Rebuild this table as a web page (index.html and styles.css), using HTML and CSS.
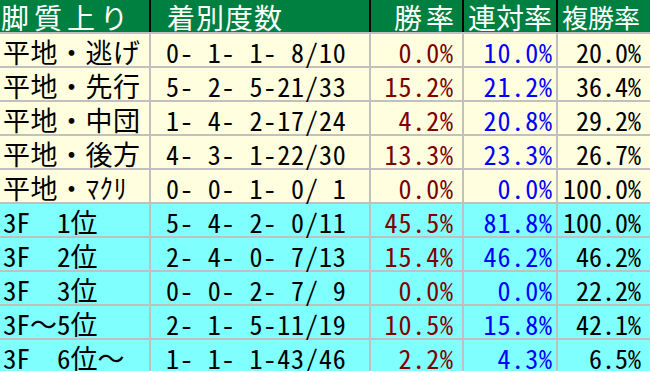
FILE: index.html
```
<!DOCTYPE html>
<html lang="ja">
<head>
<meta charset="utf-8">
<link rel="stylesheet" href="styles.css">
</head>
<body>
<div class="tbl">
  <div class="row head">
    <div class="c h1">脚質上り</div>
    <div class="c h2">着別度数</div>
    <div class="c h3">勝率</div>
    <div class="c h4">連対率</div>
    <div class="c h5">複勝率</div>
  </div>
  <div class="row cream">
    <div class="c lab">平地・逃げ</div>
    <div class="c num rec">0- 1- 1- 8/10</div>
    <div class="c num p3 red">0.0%</div>
    <div class="c num p4 blue">10.0%</div>
    <div class="c num p5">20.0%</div>
  </div>
  <div class="row cream">
    <div class="c lab">平地・先行</div>
    <div class="c num rec">5- 2- 5-21/33</div>
    <div class="c num p3 red">15.2%</div>
    <div class="c num p4 blue">21.2%</div>
    <div class="c num p5">36.4%</div>
  </div>
  <div class="row cream">
    <div class="c lab">平地・中団</div>
    <div class="c num rec">1- 4- 2-17/24</div>
    <div class="c num p3 red">4.2%</div>
    <div class="c num p4 blue">20.8%</div>
    <div class="c num p5">29.2%</div>
  </div>
  <div class="row cream">
    <div class="c lab">平地・後方</div>
    <div class="c num rec">4- 3- 1-22/30</div>
    <div class="c num p3 red">13.3%</div>
    <div class="c num p4 blue">23.3%</div>
    <div class="c num p5">26.7%</div>
  </div>
  <div class="row cream">
    <div class="c lab">平地・ﾏｸﾘ</div>
    <div class="c num rec">0- 0- 1- 0/ 1</div>
    <div class="c num p3 red">0.0%</div>
    <div class="c num p4 blue">0.0%</div>
    <div class="c num p5">100.0%</div>
  </div>
  <div class="row cyan">
    <div class="c lab3">3F  1位</div>
    <div class="c num rec">5- 4- 2- 0/11</div>
    <div class="c num p3 red">45.5%</div>
    <div class="c num p4 blue">81.8%</div>
    <div class="c num p5">100.0%</div>
  </div>
  <div class="row cyan">
    <div class="c lab3">3F  2位</div>
    <div class="c num rec">2- 4- 0- 7/13</div>
    <div class="c num p3 red">15.4%</div>
    <div class="c num p4 blue">46.2%</div>
    <div class="c num p5">46.2%</div>
  </div>
  <div class="row cyan">
    <div class="c lab3">3F  3位</div>
    <div class="c num rec">0- 0- 2- 7/ 9</div>
    <div class="c num p3 red">0.0%</div>
    <div class="c num p4 blue">0.0%</div>
    <div class="c num p5">22.2%</div>
  </div>
  <div class="row cyan">
    <div class="c lab3">3F～5位</div>
    <div class="c num rec">2- 1- 5-11/19</div>
    <div class="c num p3 red">10.5%</div>
    <div class="c num p4 blue">15.8%</div>
    <div class="c num p5">42.1%</div>
  </div>
  <div class="row cyan">
    <div class="c lab3">3F  6位～</div>
    <div class="c num rec">1- 1- 1-43/46</div>
    <div class="c num p3 red">2.2%</div>
    <div class="c num p4 blue">4.3%</div>
    <div class="c num p5">6.5%</div>
  </div>
</div>
</body>
</html>
```
FILE: styles.css
```
html, body {
  margin: 0;
  padding: 0;
  background: #ffffff;
}

.tbl {
  width: 650px;
  display: flex;
  flex-direction: column;
  row-gap: 2px;
  background: #c0c0c0;
}

.row {
  display: grid;
  grid-template-columns: 149px 218px 91px 92px 92px;
  column-gap: 2px;
  height: 32px;
}

.head {
  background: #000000;
}

.c {
  display: flex;
  align-items: center;
  box-sizing: border-box;
  height: 32px;
  padding-top: 3px;
  white-space: pre;
  font-family: "Noto Sans Mono CJK JP", "Noto Sans CJK JP", monospace;
  color: #000000;
  line-height: 1;
}

.head .c {
  background: #008040;
  color: #ffffff;
  font-size: 28px;
  padding-top: 1px;
}

.cream .c {
  background: #ffffe0;
}

.cyan .c {
  background: #80ffff;
}

.h1 {
  padding-left: 1px;
  letter-spacing: 5px;
}

.h2 {
  padding-left: 16px;
  letter-spacing: 1px;
}

.h3 {
  justify-content: flex-end;
  padding-right: 4px;
  letter-spacing: 4px;
}

.h4 {
  padding-left: 4px;
}

.head .h5 {
  padding-left: 4px;
  font-size: 26px;
}

.lab {
  padding-left: 3px;
  font-size: 27px;
  letter-spacing: 0.5px;
}

.lab3 {
  padding-left: 3px;
  font-size: 27px;
}

.num {
  font-size: 26px;
  letter-spacing: 0.9px;
}

.rec {
  padding-left: 15px;
}

.p3 {
  justify-content: flex-end;
  padding-right: 8px;
}

.p4 {
  justify-content: flex-end;
  padding-right: 3px;
}

.p5 {
  justify-content: flex-end;
  padding-right: 9px;
  letter-spacing: 0;
}

.red {
  color: #800000;
}

.blue {
  color: #0000ff;
}
```
